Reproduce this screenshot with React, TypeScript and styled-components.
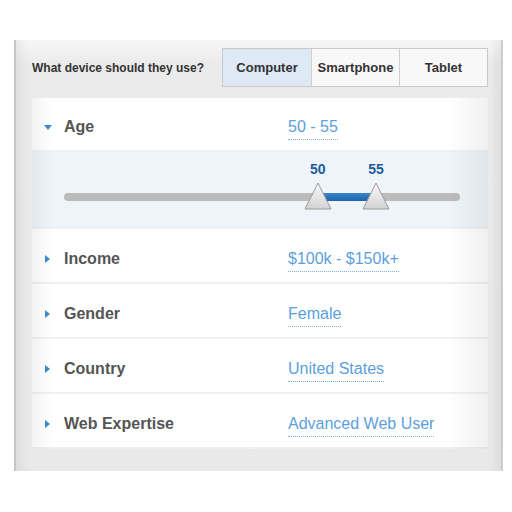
import styled, { createGlobalStyle } from 'styled-components';

const GlobalStyle = createGlobalStyle`
	body {
		margin: 0;
		background: #fff;
		font-family: "Liberation Sans", Arial, sans-serif;
	}
`;

const Frame = styled.div`
	margin: 40px 0 0 14px;
	width: 489px;
	height: 431px;
	box-sizing: border-box;
	border-left: 2px solid #c6c6c6;
	border-right: 2px solid #cdcdcd;
	background: linear-gradient(to bottom, #f6f6f6 0, #ebebeb 24px, #e9e9e9 100%);
	box-shadow: inset 14px 0 10px -8px rgba(0, 0, 0, 0.05), inset -14px 0 10px -8px rgba(0, 0, 0, 0.05);
	padding: 8px 13px 0 16px;
	display: flex;
	flex-direction: column;
`;

const Header = styled.div`
	display: flex;
	align-items: center;
	justify-content: space-between;
	height: 39px;
	margin-bottom: 11px;
`;

const Question = styled.span`
	font-size: 12px;
	font-weight: bold;
	color: #333;
	padding-top: 1px;
`;

const Tabs = styled.div`
	display: flex;
	height: 39px;
	box-sizing: border-box;
	border: 1px solid #c9c9c9;
	background: #f8f8f8;
`;

const Tab = styled.div<{ $active?: boolean; $w: number }>`
	width: ${(p) => p.$w}px;
	display: flex;
	align-items: center;
	justify-content: center;
	font-size: 13px;
	font-weight: bold;
	color: #333;
	background: ${(p) => (p.$active ? '#dde9f4' : 'transparent')};
	& + & {
		border-left: 1px solid #cfcfcf;
	}
`;

const List = styled.div`
	position: relative;
	background: #fff;
	&::after {
		content: '';
		position: absolute;
		inset: 0;
		pointer-events: none;
		background: linear-gradient(to right, rgba(0, 0, 0, 0.05) 0, rgba(0, 0, 0, 0) 20px, rgba(0, 0, 0, 0) calc(100% - 40px), rgba(0, 0, 0, 0.06) 100%);
	}
`;

const Row = styled.div<{ $h?: number }>`
	display: grid;
	grid-template-columns: 20px 224px 1fr;
	align-items: center;
	height: ${(p) => p.$h ?? 55}px;
	box-sizing: border-box;
	padding: 6px 0 0 12px;
	border-bottom: 2px solid #f0f0f0;
`;

const Arrow = styled.span<{ $open?: boolean }>`
	width: 0;
	height: 0;
	${(p) =>
		p.$open
			? `border-left: 4.5px solid transparent;
		border-right: 4.5px solid transparent;
		border-top: 5px solid #3d8bd1;
		margin-left: 0;`
			: `border-top: 4.5px solid transparent;
		border-bottom: 4.5px solid transparent;
		border-left: 5px solid #3d8bd1;
		margin-left: 1px;`}
`;

const Label = styled.span`
	font-size: 16px;
	font-weight: bold;
	color: #555;
`;

const Value = styled.span`
	justify-self: start;
	font-size: 16px;
	color: #5ba0dd;
	margin-top: 4px;
	padding-bottom: 3px;
	border-bottom: 1px dotted #78b0e2;
`;

const SliderArea = styled.div`
	position: relative;
	height: 77px;
	box-sizing: border-box;
	background: #eef4f9;
	border-bottom: 2px solid #f0f0f0;
`;

const Track = styled.div`
	position: absolute;
	left: 32px;
	right: 28px;
	top: 41px;
	height: 8px;
	border-radius: 4px;
	background: #bbbbbb;
`;

const Range = styled.div`
	position: absolute;
	top: 0;
	height: 8px;
	background: linear-gradient(to bottom, #3b86cc, #1f63a9);
`;

const Handle = styled.div`
	position: absolute;
	top: -11px;
	width: 28px;
	height: 28px;
	margin-left: -14px;
`;

const HandleLabel = styled.span`
	position: absolute;
	top: -21px;
	left: 0;
	width: 28px;
	text-align: center;
	font-size: 14px;
	font-weight: bold;
	color: #1c5d9c;
`;

const Footer = styled.div`
	height: 21px;
`;

const Thumb = () => (
	<svg width="28" height="28" viewBox="0 0 28 28">
		<defs>
			<linearGradient id="thumbFill" x1="0" y1="0" x2="0" y2="1">
				<stop offset="0" stopColor="#fafafa" />
				<stop offset="1" stopColor="#d2d2d2" />
			</linearGradient>
		</defs>
		<path d="M14 1 L27 27 L1 27 Z" fill="url(#thumbFill)" stroke="#9a9a9a" strokeWidth="1" strokeLinejoin="round" />
	</svg>
);

const rows = [
	{ label: 'Income', value: '$100k - $150k+' },
	{ label: 'Gender', value: 'Female' },
	{ label: 'Country', value: 'United States' },
	{ label: 'Web Expertise', value: 'Advanced Web User' },
];

const low = 64.1;
const high = 78.8;

const App = () => {
	return (
		<>
			<GlobalStyle />
			<Frame>
				<Header>
					<Question>What device should they use?</Question>
					<Tabs>
						<Tab $active $w={88}>Computer</Tab>
						<Tab $w={87}>Smartphone</Tab>
						<Tab $w={87}>Tablet</Tab>
					</Tabs>
				</Header>
				<List>
					<Row $h={54}>
						<Arrow $open />
						<Label>Age</Label>
						<Value>50 - 55</Value>
					</Row>
					<SliderArea>
						<Track>
							<Range style={{ left: `${low}%`, width: `${high - low}%` }} />
							<Handle style={{ left: `${low}%` }}>
								<HandleLabel>50</HandleLabel>
								<Thumb />
							</Handle>
							<Handle style={{ left: `${high}%` }}>
								<HandleLabel>55</HandleLabel>
								<Thumb />
							</Handle>
						</Track>
					</SliderArea>
					{rows.map((r) => (
						<Row key={r.label}>
							<Arrow />
							<Label>{r.label}</Label>
							<Value>{r.value}</Value>
						</Row>
					))}
				</List>
				<Footer />
			</Frame>
		</>
	);
};

export default App;
